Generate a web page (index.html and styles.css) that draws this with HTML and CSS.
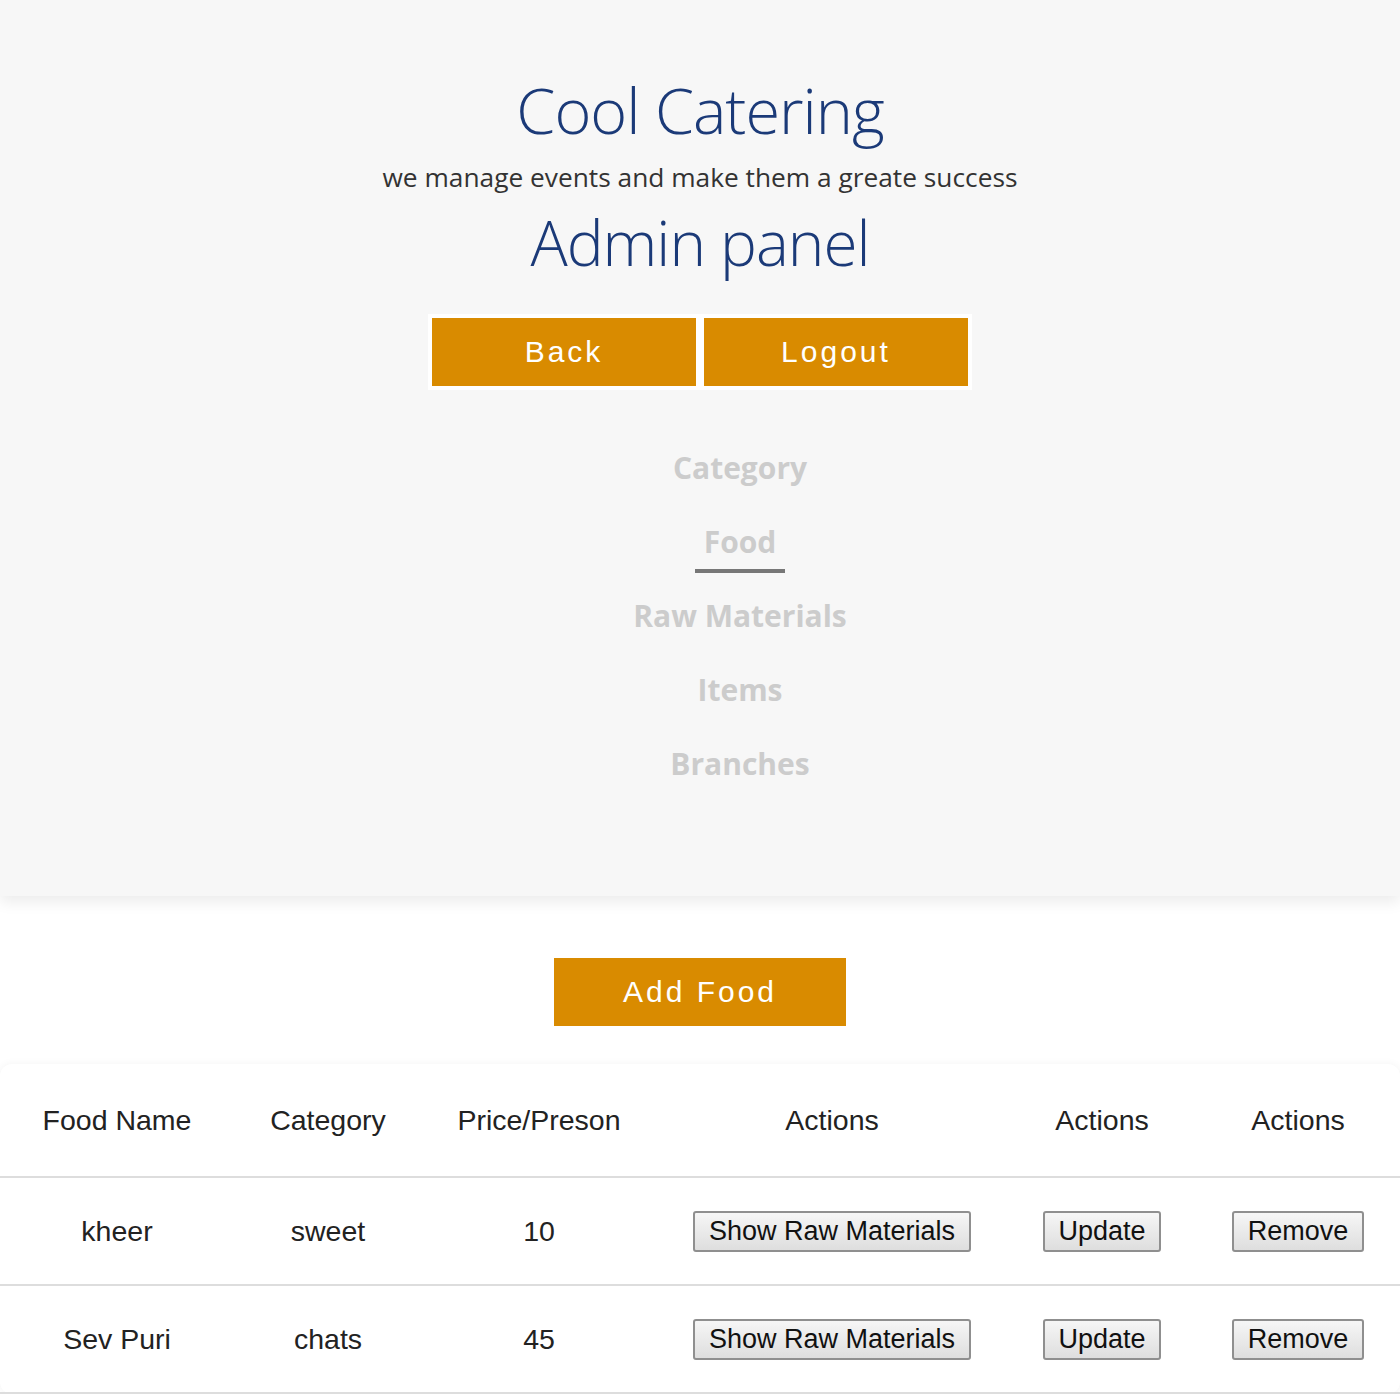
FILE: index.html
```html
<!DOCTYPE html>
<html lang="en">
<head>
<meta charset="utf-8">
<title>Cool Catering - Admin panel</title>
<link rel="stylesheet" href="styles.css">
</head>
<body>
<header class="hero">
  <h1 class="brand">Cool Catering</h1>
  <p class="tagline">we manage events and make them a greate success</p>
  <h2 class="panel-title">Admin panel</h2>
  <div class="hero-actions">
    <button class="btn-orange btn-framed">Back</button>
    <button class="btn-orange btn-framed">Logout</button>
  </div>
  <ul class="nav">
    <li><a href="#">Category</a></li>
    <li><a href="#" class="active">Food</a></li>
    <li><a href="#">Raw Materials</a></li>
    <li><a href="#">Items</a></li>
    <li><a href="#">Branches</a></li>
  </ul>
</header>
<main class="content">
  <div class="add-row">
    <button class="btn-orange btn-add">Add Food</button>
  </div>
  <div class="table-card">
    <table class="food-table">
      <colgroup>
        <col class="c1"><col class="c2"><col class="c3"><col class="c4"><col class="c5"><col class="c6">
      </colgroup>
      <thead>
        <tr><th>Food Name</th><th>Category</th><th>Price/Preson</th><th>Actions</th><th>Actions</th><th>Actions</th></tr>
      </thead>
      <tbody>
        <tr><td>kheer</td><td>sweet</td><td>10</td><td><button class="btn-sys">Show Raw Materials</button></td><td><button class="btn-sys">Update</button></td><td><button class="btn-sys">Remove</button></td></tr>
        <tr><td>Sev Puri</td><td>chats</td><td>45</td><td><button class="btn-sys">Show Raw Materials</button></td><td><button class="btn-sys">Update</button></td><td><button class="btn-sys">Remove</button></td></tr>
      </tbody>
    </table>
  </div>
</main>
</body>
</html>
```
FILE: styles.css
```css
html, body {
  margin: 0;
  padding: 0;
  background: #ffffff;
}
body {
  font-family: "Open Sans", "Liberation Sans", sans-serif;
}
.hero {
  background: #f7f7f7;
  height: 896px;
  box-sizing: border-box;
  padding-top: 70px;
  text-align: center;
  box-shadow: 0 6px 14px rgba(0, 0, 0, 0.08);
  position: relative;
  z-index: 1;
}
.brand {
  margin: 0;
  font-family: "Open Sans", sans-serif;
  font-weight: 300;
  font-size: 63px;
  line-height: 80px;
  color: #1b3a78;
  letter-spacing: -1px;
}
.tagline {
  margin: 10px 0 0;
  font-family: "Open Sans", sans-serif;
  font-size: 26.3px;
  line-height: 34px;
  color: #333333;
}
.panel-title {
  margin: 3px 0 0;
  font-family: "Open Sans", sans-serif;
  font-weight: 300;
  font-size: 62px;
  line-height: 90px;
  color: #1b3a78;
  letter-spacing: -1px;
}
.hero-actions {
  display: flex;
  justify-content: center;
  margin-top: 27px;
}
.btn-orange {
  background: #d98b00;
  color: #ffffff;
  border: none;
  font-family: "Liberation Sans", Arial, sans-serif;
  font-size: 30px;
  letter-spacing: 3px;
  padding: 0;
  cursor: pointer;
}
.btn-framed {
  width: 272px;
  height: 76px;
  border: 4px solid #ffffff;
}
.nav {
  list-style: none;
  margin: 59px 0 0;
  padding: 0 0 0 80px;
}
.nav li {
  height: 74px;
}
.nav a {
  display: inline-block;
  font-family: "Open Sans", sans-serif;
  font-weight: 700;
  font-size: 30px;
  line-height: 38px;
  color: #cccccc;
  text-decoration: none;
  padding: 0 9px 8px;
}
.nav a.active {
  border-bottom: 4px solid #777777;
}
.content {
  padding-top: 62px;
}
.add-row {
  display: flex;
  justify-content: center;
}
.btn-add {
  width: 292px;
  height: 68px;
}
.table-card {
  margin-top: 38px;
  background: #ffffff;
  border-radius: 12px;
  box-shadow: 0 0 8px rgba(0, 0, 0, 0.05);
}
.food-table {
  width: 100%;
  border-collapse: collapse;
  table-layout: fixed;
  font-family: "Liberation Sans", Arial, sans-serif;
  font-size: 28.5px;
  color: #222222;
}
.c1 { width: 234px; }
.c2 { width: 188px; }
.c3 { width: 234px; }
.c4 { width: 352px; }
.c5 { width: 188px; }
.c6 { width: 204px; }
.food-table th {
  font-weight: normal;
  height: 112px;
  border-bottom: 2px solid #dddddd;
  text-align: center;
  padding: 0;
}
.food-table td {
  height: 106px;
  border-bottom: 2px solid #dddddd;
  text-align: center;
  padding: 0;
}
.btn-sys {
  font-family: "Liberation Sans", Arial, sans-serif;
  font-size: 27px;
  color: #111111;
  padding: 2px 13.5px;
  height: 41px;
  border: 2px solid #8f8f8f;
  border-radius: 3px;
  background: linear-gradient(#f6f6f6, #dedede);
}
```
